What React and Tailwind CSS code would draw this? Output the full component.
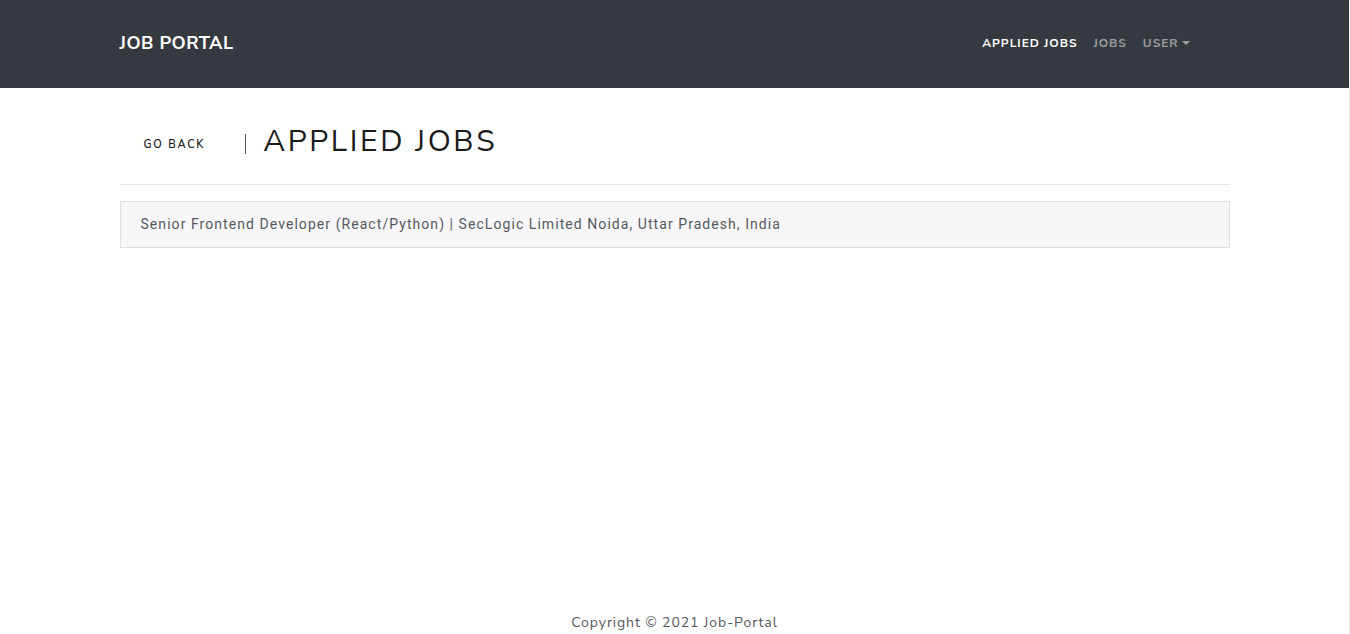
import React from "react";

const heading = { fontFamily: '"Nunito Sans", Lato, "Open Sans", sans-serif' };

function Navbar() {
    return (
        <nav className="bg-[#343a40] h-[88px]">
            <div className="mx-auto w-[1140px] px-[15px] h-full flex items-center justify-between pb-[2px]" style={heading}>
                <a className="text-white font-bold text-[18px] tracking-[0.03em]">JOB PORTAL</a>
                <ul className="flex items-center gap-0 mr-[40px] text-[12px] font-bold tracking-[0.08em]">
                    <li className="px-2 text-white">APPLIED JOBS</li>
                    <li className="px-2 text-[#9a9da0]">JOBS</li>
                    <li className="pl-2 text-[#9a9da0] flex items-center">
                        USER
                        <span className="ml-[3px] inline-block w-0 h-0 border-l-[4px] border-r-[4px] border-t-[4px] border-l-transparent border-r-transparent border-t-[#9a9da0]"></span>
                    </li>
                </ul>
            </div>
        </nav>
    );
}

export default function App() {
    const jobs = ["Senior Frontend Developer (React/Python) | SecLogic Limited Noida, Uttar Pradesh, India"];

    return (
        <div className="min-h-[634px] flex flex-col bg-white border-r border-[#e9e9e9]">
            <Navbar />
            <main className="flex-1">
                <div className="mx-auto w-[1140px] px-[15px]">
                    <div className="flex items-center h-[96px] pt-[12px]" style={heading}>
                        <button className="px-[24px] pt-[14px] pb-2 text-[11px] tracking-[0.16em] text-[#1a1a1a] font-semibold">GO BACK</button>
                        <span className="ml-[16px] w-px h-[20px] bg-[#555] mt-[4px]"></span>
                        <h1 className="ml-[17px] text-[30px] tracking-[0.087em] text-[#1a1a1a] leading-none font-normal">APPLIED JOBS</h1>
                    </div>
                    <hr className="border-t border-[#e5e5e5] mb-[16px]" />
                    <ul>
                        {jobs.map((j) => (
                            <li
                                key={j}
                                className="bg-[#f7f7f9] border border-[#dfdfdf] h-[47px] flex items-center px-[20px] text-[14px] text-[#55595c] tracking-[1.06px]"
                                style={{ fontFamily: "Roboto, sans-serif" }}
                            >
                                {j}
                            </li>
                        ))}
                    </ul>
                </div>
            </main>
            <footer className="text-center text-[14px] text-[#55595c] tracking-[0.065em] h-[24px] leading-[24px] pt-[1px]" style={heading}>
                Copyright © 2021 Job-Portal
            </footer>
        </div>
    );
}
